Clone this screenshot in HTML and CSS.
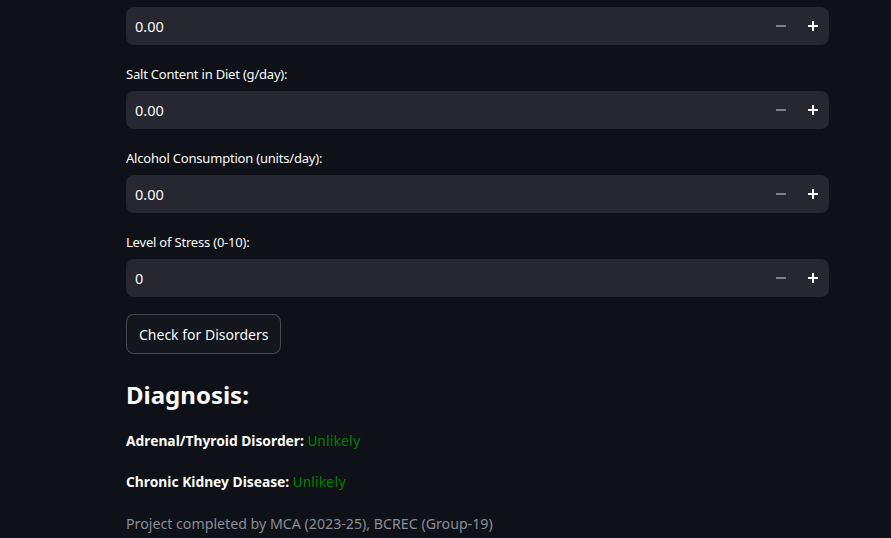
FILE: index.html
```html
<!DOCTYPE html>
<html>
<head>
<meta charset="utf-8">
<link rel="stylesheet" href="styles.css">
</head>
<body>
<main class="main">
  <div class="field first">
    <div class="numinput">
      <input class="num" value="0.00">
      <button class="step minus" aria-label="decrement"><svg width="10" height="10" viewBox="0 0 10 10"><rect x="0" y="4" width="10" height="2" fill="currentColor"/></svg></button>
      <button class="step plus" aria-label="increment"><svg width="10" height="10" viewBox="0 0 10 10"><rect x="0" y="4" width="10" height="2" fill="currentColor"/><rect x="4" y="0" width="2" height="10" fill="currentColor"/></svg></button>
    </div>
  </div>
  <div class="field">
    <label class="label">Salt Content in Diet (g/day):</label>
    <div class="numinput">
      <input class="num" value="0.00">
      <button class="step minus" aria-label="decrement"><svg width="10" height="10" viewBox="0 0 10 10"><rect x="0" y="4" width="10" height="2" fill="currentColor"/></svg></button>
      <button class="step plus" aria-label="increment"><svg width="10" height="10" viewBox="0 0 10 10"><rect x="0" y="4" width="10" height="2" fill="currentColor"/><rect x="4" y="0" width="2" height="10" fill="currentColor"/></svg></button>
    </div>
  </div>
  <div class="field">
    <label class="label">Alcohol Consumption (units/day):</label>
    <div class="numinput">
      <input class="num" value="0.00">
      <button class="step minus" aria-label="decrement"><svg width="10" height="10" viewBox="0 0 10 10"><rect x="0" y="4" width="10" height="2" fill="currentColor"/></svg></button>
      <button class="step plus" aria-label="increment"><svg width="10" height="10" viewBox="0 0 10 10"><rect x="0" y="4" width="10" height="2" fill="currentColor"/><rect x="4" y="0" width="2" height="10" fill="currentColor"/></svg></button>
    </div>
  </div>
  <div class="field">
    <label class="label">Level of Stress (0-10):</label>
    <div class="numinput">
      <input class="num" value="0">
      <button class="step minus" aria-label="decrement"><svg width="10" height="10" viewBox="0 0 10 10"><rect x="0" y="4" width="10" height="2" fill="currentColor"/></svg></button>
      <button class="step plus" aria-label="increment"><svg width="10" height="10" viewBox="0 0 10 10"><rect x="0" y="4" width="10" height="2" fill="currentColor"/><rect x="4" y="0" width="2" height="10" fill="currentColor"/></svg></button>
    </div>
  </div>
  <div class="btnrow"><button class="btn">Check for Disorders</button></div>
  <h3 class="heading">Diagnosis:</h3>
  <p class="result"><strong>Adrenal/Thyroid Disorder:</strong> <span class="ok">Unlikely</span></p>
  <p class="result"><strong>Chronic Kidney Disease:</strong> <span class="ok">Unlikely</span></p>
  <p class="footer">Project completed by MCA (2023-25), BCREC (Group-19)</p>
</main>
</body>
</html>
```
FILE: styles.css
```css
html, body {
  margin: 0;
  padding: 0;
  background: #0e1117;
  color: #fafafa;
  font-family: "Source Sans Pro", "Noto Sans", "Open Sans", sans-serif;
  overflow: hidden;
}
.main {
  width: 703px;
  margin-left: 126px;
  display: flex;
  flex-direction: column;
}
.field {
  display: flex;
  flex-direction: column;
  margin-top: 19px;
}
.field.first {
  margin-top: 7px;
}
.label {
  font-size: 13px;
  line-height: 20px;
  height: 20px;
  margin-bottom: 7px;
  letter-spacing: -0.2px;
}
.numinput {
  display: flex;
  align-items: center;
  height: 38px;
  background: #262730;
  border-radius: 8px;
}
.num {
  flex: 1;
  min-width: 0;
  background: transparent;
  border: none;
  outline: none;
  color: #fafafa;
  font-family: inherit;
  font-size: 14.5px;
  padding: 0 9px;
  height: 38px;
}
.step {
  width: 32px;
  height: 38px;
  background: transparent;
  border: none;
  padding: 0;
  display: flex;
  align-items: center;
  justify-content: center;
}
.step.minus { color: #7e808a; }
.step.plus { color: #fafafa; }
.btnrow {
  margin-top: 17px;
}
.btn {
  background: #13161d;
  color: #fafafa;
  border: 1px solid rgba(250, 250, 250, 0.22);
  border-radius: 8px;
  height: 40px;
  padding: 0 12px;
  font-family: inherit;
  font-size: 14px;
}
.heading {
  margin: 23px 0 0;
  font-size: 24px;
  line-height: 36px;
  font-weight: 700;
}
.result {
  margin: 17px 0 0;
  font-size: 13.8px;
  line-height: 22px;
}
.result + .result {
  margin-top: 19px;
}
.result strong { font-weight: 700; }
.ok {
  color: #008000;
  font-family: "DejaVu Sans", sans-serif;
  font-size: 13.5px;
}
.footer {
  margin: 20px 0 0;
  font-size: 14.2px;
  line-height: 22px;
  color: #8b8d97;
}
```
